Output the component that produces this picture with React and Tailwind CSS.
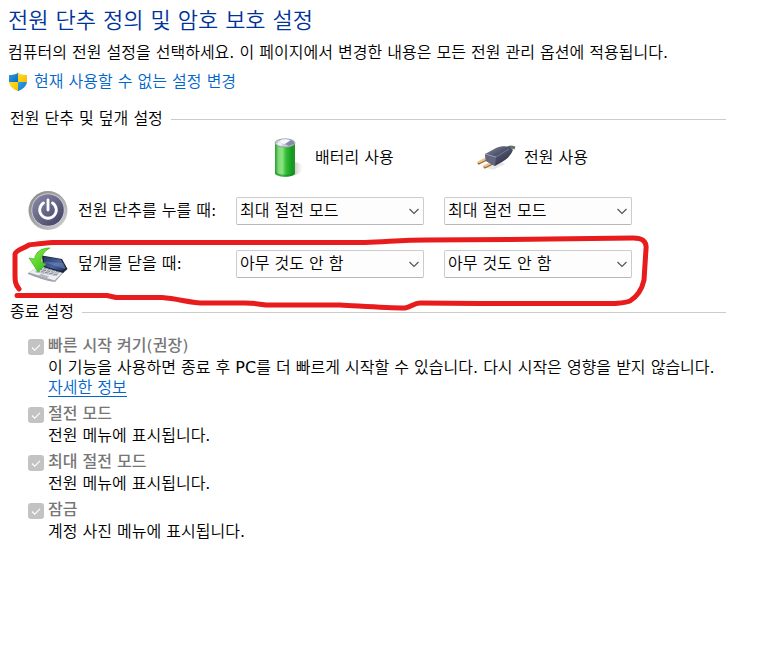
const ACTIONS = ['최대 절전 모드', '아무 것도 안 함', '절전', '시스템 종료'];

function ShieldIcon() {
  return (
    <svg className="h-5 w-5 shrink-0" viewBox="0 0 20 20" aria-hidden="true">
      <defs>
        <clipPath id="shield">
          <path d="M10 0.8C7.6 2.7 4.4 3.1 1 3.1V9c0 5 4 8 9 10.2 5-2.2 9-5.2 9-10.2V3.1c-3.400 0-6.600-.4-9-2.300z" />
        </clipPath>
        <linearGradient id="shieldBlue" x1="0" y1="0" x2="1" y2="1">
          <stop offset="0" stopColor="#31a5e7" />
          <stop offset="1" stopColor="#0b68bd" />
        </linearGradient>
        <linearGradient id="shieldGold" x1="0" y1="0" x2="1" y2="1">
          <stop offset="0" stopColor="#ffdf28" />
          <stop offset="1" stopColor="#f8b900" />
        </linearGradient>
      </defs>
      <g clipPath="url(#shield)">
        <rect width="10" height="10" fill="url(#shieldBlue)" />
        <rect x="10" width="10" height="10" fill="url(#shieldGold)" />
        <rect y="10" width="10" height="10" fill="url(#shieldGold)" />
        <rect x="10" y="10" width="10" height="10" fill="url(#shieldBlue)" />
      </g>
    </svg>
  );
}

function BatteryIcon() {
  return (
    <svg className="h-[42px] w-10 shrink-0" viewBox="0 0 40 42" aria-hidden="true">
      <defs>
        <linearGradient id="cell" x1="0" x2="1">
          <stop offset="0" stopColor="#299b2b" />
          <stop offset="0.18" stopColor="#7edb78" />
          <stop offset="0.36" stopColor="#8ce383" />
          <stop offset="0.55" stopColor="#35bd38" />
          <stop offset="0.85" stopColor="#119b1e" />
          <stop offset="1" stopColor="#2e8e32" />
        </linearGradient>
        <linearGradient id="cellShadow" x1="0" x2="1">
          <stop offset="0" stopColor="#777" stopOpacity="0.7" />
          <stop offset="1" stopColor="#bbb" stopOpacity="0" />
        </linearGradient>
      </defs>
      <path d="M24 25 C31 25 36 28 35 31 C34 35 29 39 22 39z" fill="url(#cellShadow)" />
      <path d="M7 7v29c1 5 19 5 20 0V7z" fill="url(#cell)" />
      <path d="M7 34c2 5 18 5 20 0v2c-1 5-19 5-20 0z" fill="#168b20" opacity="0.6" />
      <ellipse cx="17" cy="6" rx="10" ry="4.200" fill="#c9cad8" stroke="#789a7b" strokeWidth="0.7" />
      <ellipse cx="17" cy="4.600" rx="5" ry="2.300" fill="#f6f6fc" />
      <path d="M17 7l6-4c3 1 4 3 3 4l-5 2z" fill="#858aac" />
      <path d="M11 4l4 4-3 1-3-2z" fill="#eef0f8" />
    </svg>
  );
}

function PlugIcon() {
  return (
    <svg className="h-[42px] w-10 shrink-0" viewBox="0 0 40 42" aria-hidden="true">
      <defs>
        <linearGradient id="plug" x1="0" y1="0" x2="0.8" y2="1">
          <stop offset="0" stopColor="#8d91a8" />
          <stop offset="0.4" stopColor="#555970" />
          <stop offset="1" stopColor="#292c40" />
        </linearGradient>
      </defs>
      <path d="M5 29l12 4 12-6-9-4z" fill="#bbb" opacity="0.35" />
      <path d="M11 22L3 26" stroke="#9b6b36" strokeWidth="3" strokeLinecap="round" />
      <path d="M11 21L3 25" stroke="#f2c58d" strokeWidth="2" strokeLinecap="round" />
      <path d="M17 26L9 30" stroke="#9b6b36" strokeWidth="3" strokeLinecap="round" />
      <path d="M17 25L9 29" stroke="#f2c58d" strokeWidth="2" strokeLinecap="round" />
      <path d="M31 12c3-3 5-2 8-1" fill="none" stroke="#69716e" strokeWidth="3" />
      <path d="M9 17l11-6c4-2 10-2 14-1l3 3c-2 5-6 9-11 12l-7 4-9-5z" fill="url(#plug)" />
      <path d="M9 17l11 3-1 9-9-5z" fill="#626781" />
      <path d="M20 20l13-8" stroke="#a2a5b8" strokeWidth="0.8" opacity="0.6" />
      <path d="M9 17l11 3" stroke="#a8abc0" strokeWidth="0.8" />
    </svg>
  );
}

function PowerIcon() {
  return (
    <svg className="h-[42px] w-10 shrink-0" viewBox="0 0 40 42" aria-hidden="true">
      <defs>
        <linearGradient id="rim" x1="0" y1="0" x2="1" y2="1">
          <stop offset="0" stopColor="#858585" />
          <stop offset="0.5" stopColor="#a9a9a9" />
          <stop offset="1" stopColor="#d2d2d2" />
        </linearGradient>
        <linearGradient id="face" x1="0" y1="0" x2="1" y2="1">
          <stop offset="0" stopColor="#8b8ca9" />
          <stop offset="0.5" stopColor="#666786" />
          <stop offset="1" stopColor="#3c3d60" />
        </linearGradient>
      </defs>
      <circle cx="20" cy="20.500" r="19.500" fill="url(#rim)" />
      <circle cx="20" cy="20" r="16.500" fill="#dadae2" />
      <circle cx="20" cy="20" r="15.800" fill="url(#face)" />
      <path d="M15.500 13a8.300 8.300 0 1 0 9 0" fill="none" stroke="#fff" strokeWidth="2.800" strokeLinecap="round" />
      <path d="M20 10v10" stroke="#fff" strokeWidth="2.800" strokeLinecap="round" />
    </svg>
  );
}

function LidIcon() {
  return (
    <svg className="h-[42px] w-10 shrink-0" viewBox="0 0 40 42" aria-hidden="true">
      <defs>
        <linearGradient id="lid" x1="0" y1="0" x2="1" y2="1">
          <stop offset="0" stopColor="#243664" />
          <stop offset="0.55" stopColor="#4a62a0" />
          <stop offset="1" stopColor="#17264f" />
        </linearGradient>
        <linearGradient id="arrow" x1="0" y1="0" x2="1" y2="1">
          <stop offset="0" stopColor="#8cf04d" />
          <stop offset="1" stopColor="#32b913" />
        </linearGradient>
      </defs>
      <path d="M0 30l12-7 24 6-9 10C17 38 8 34 0 31z" fill="#9fa4ac" />
      <path d="M1 29.500l12-6.500 22 6-8.500 8.500z" fill="#eceef2" />
      <path d="M7 29l6-5 19 5-4 4z" fill="#81868f" />
      <path d="M8 28.500l20 4M10 27l20 4M12 25l19 5M12 29l4-4M16 30l4-4M20 31l4-4M24 32l4-4" stroke="#dfe3e9" strokeWidth="0.800" />
      <path d="M13 31l8 2.500-3 2-8-2.800z" fill="#b4b8bf" />
      <path d="M14 12.500L34 16 39.500 26 35 30 15 24z" fill="#1c2233" />
      <path d="M16 13.500L33 16.500 37.500 25 34 28.500 16 23z" fill="url(#lid)" />
      <path d="M16 19l19 1 2.500 5-1 1z" fill="#7d96c5" opacity="0.45" />
      <path d="M22 5C14 5 8 8 6.500 16L1 15 10 29 18 21 13 19C13 13 16 8 22 5z" fill="url(#arrow)" stroke="#38b61b" strokeWidth="0.7" />
    </svg>
  );
}

function SectionTitle({ children }) {
  return (
    <div className="flex items-center gap-2 pl-[10px]">
      <h2 className="leading-6">{children}</h2>
      <span className="h-px flex-1 bg-[#cbcbcb]" />
    </div>
  );
}

function ActionSelect({ label, value }) {
  return (
    <div className="relative">
      <select
        aria-label={label}
        defaultValue={value}
        className="block h-7 w-full appearance-none rounded-[2px] border border-[#cccccc] border-b-[#b8b8b8] bg-[#fdfdfd] pr-6 pl-[3px] leading-6"
      >
        {ACTIONS.map((a) => (
          <option key={a}>{a}</option>
        ))}
      </select>
      <svg className="pointer-events-none absolute top-[11px] right-[5px] h-[7px] w-[10px]" viewBox="0 0 10 7" aria-hidden="true">
        <path d="M0.500 1L5 5.500 9.500 1" fill="none" stroke="#505050" strokeWidth="1.100" />
      </svg>
    </div>
  );
}

function ActionRow({ icon, label, value }) {
  return (
    <>
      <div className="flex items-center gap-[10px]">
        {icon}
        <span className="whitespace-nowrap">{label}</span>
      </div>
      <ActionSelect label={`${label} 배터리 사용`} value={value} />
      <ActionSelect label={`${label} 전원 사용`} value={value} />
    </>
  );
}

function Option({ id, label, description, children }) {
  return (
    <div className="flex gap-1">
      <span className="relative mt-1 h-4 w-4 shrink-0">
        <input id={id} type="checkbox" defaultChecked disabled className="block h-4 w-4 appearance-none rounded-[3px] bg-[#c3c3c3]" />
        <svg className="pointer-events-none absolute inset-0" width="16" height="16" viewBox="0 0 16 16" aria-hidden="true">
          <path d="M4 8.500l2.700 2.700L12 5.800" fill="none" stroke="#fff" strokeWidth="1.100" />
        </svg>
      </span>
      <div className="leading-[22px]">
        <label htmlFor={id} className="block font-['DejaVu_Sans','Noto_Sans_CJK_KR',sans-serif] font-medium text-[#767676]">{label}</label>
        <p>{description}</p>
        {children}
      </div>
    </div>
  );
}

export default function App() {
  return (
    <main className="relative min-h-screen bg-white pt-[6px] pr-[51px] font-['DejaVu_Sans','Noto_Sans_CJK_KR_DemiLight','Noto_Sans_CJK_KR',sans-serif] text-base text-black">
      <header className="flex flex-col gap-[5px] pl-2">
        <h1 className="text-[22px] leading-[30px] text-[#003399]">전원 단추 정의 및 암호 보호 설정</h1>
        <p className="leading-6">컴퓨터의 전원 설정을 선택하세요. 이 페이지에서 변경한 내용은 모든 전원 관리 옵션에 적용됩니다.</p>
        <a href="#change" className="flex items-center gap-[6px] self-start leading-6 text-[#0066cc]">
          <ShieldIcon />
          현재 사용할 수 없는 설정 변경
        </a>
      </header>

      <section className="mt-[13px]">
        <SectionTitle>전원 단추 및 덮개 설정</SectionTitle>
        <div className="mt-[6px] grid grid-cols-[208px_208px_188px] items-center pl-7">
          <div className="col-start-2 flex items-center gap-[7px] pl-8">
            <BatteryIcon />
            <span className="whitespace-nowrap">배터리 사용</span>
          </div>
          <div className="flex items-center gap-2 pl-8">
            <PlugIcon />
            <span className="whitespace-nowrap">전원 사용</span>
          </div>
        </div>
        <div className="mt-[11px] grid grid-cols-[188px_188px_188px] items-center gap-x-5 gap-y-[11px] pl-7">
          <ActionRow icon={<PowerIcon />} label="전원 단추를 누를 때:" value="최대 절전 모드" />
          <ActionRow icon={<LidIcon />} label="덮개를 닫을 때:" value="아무 것도 안 함" />
        </div>
      </section>

      <section className="mt-[15px]">
        <SectionTitle>종료 설정</SectionTitle>
        <div className="mt-[11px] flex flex-col gap-1 pl-7">
          <Option id="fast" label="빠른 시작 켜기(권장)" description="이 기능을 사용하면 종료 후 PC를 더 빠르게 시작할 수 있습니다. 다시 시작은 영향을 받지 않습니다.">
            <a href="#more" className="mb-[2px] block w-fit border-b border-[#0066cc] leading-[17px] text-[#0066cc]">자세한 정보</a>
          </Option>
          <Option id="sleep" label="절전 모드" description="전원 메뉴에 표시됩니다." />
          <Option id="hibernate" label="최대 절전 모드" description="전원 메뉴에 표시됩니다." />
          <Option id="lock" label="잠금" description="계정 사진 메뉴에 표시됩니다." />
        </div>
      </section>

      <svg className="pointer-events-none absolute top-[230px] left-0 h-[84px] w-[660px]" viewBox="0 230 660 84" aria-hidden="true">
        <path
          d="M19 289C15 284 15 281 15 273V254C16 250 22 249 29 245C37 244 43 243 53 242.500H365C386 242 402 240 427 240L510 239.500 550 239 633 238C642 238 647 241 646 249L644 280C642 289 638 296 630 301C625 303 621 303 615 303.500L480 303.500 420 303C414 303 411 307 405 308C385 308 360 306 340 305L266 305C255 303 250 303 245 303H205C190 303 180 299 162 297.500L116 297.500 107 295.500H17"
          fill="none"
          stroke="#e81c1c"
          strokeWidth="5"
          strokeLinecap="round"
          strokeLinejoin="round"
        />
      </svg>
    </main>
  );
}
